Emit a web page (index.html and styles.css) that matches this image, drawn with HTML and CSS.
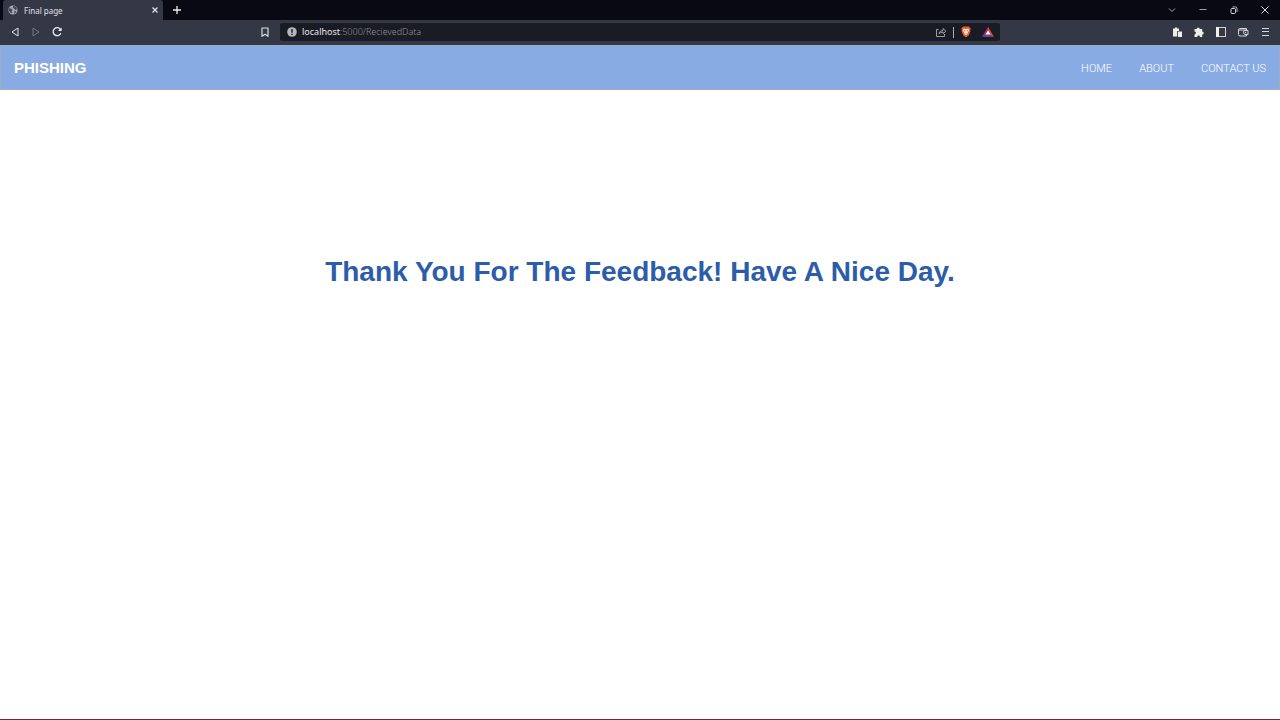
FILE: index.html
```html
<!DOCTYPE html>
<html lang="en">
<head>
<meta charset="utf-8">
<meta name="viewport" content="width=device-width, initial-scale=1">
<title>Final page</title>
<link rel="stylesheet" href="styles.css">
</head>
<body>
<div class="window">
  <div class="tabstrip">
    <div class="tab">
      <svg class="globe" viewBox="0 0 10 10"><circle cx="5" cy="5" r="4.6" fill="#a5a8b1"/><path d="M1 3.2L3.4 3.7 4.5 5 3.8 6.4 3.9 8.4 2.2 7.5.7 5zM5.2.7L8.3 2 9 4.4 7.2 4.9 6 3.6 4.8 2.8zM6.5 6L8.4 6.2 7.5 8 6 8.7z" fill="#454854"/></svg>
      <span class="tab-title">Final page</span>
      <button class="icon-btn" aria-label="Close tab"><svg class="small" viewBox="0 0 8 8"><path d="M1.5 1.5l5 5m0-5l-5 5" stroke="#e6e7eb" stroke-width="1.2"/></svg></button>
    </div>
    <button class="icon-btn new-tab" aria-label="New tab"><svg class="icon" viewBox="0 0 12 12"><path d="M6 2v8M2 6h8" stroke="#eee" stroke-width="1.3"/></svg></button>
    <div class="window-controls">
      <button class="icon-btn" aria-label="Search tabs"><svg class="icon" viewBox="0 0 12 12"><path d="M3 4.5l3 3 3-3" fill="none" stroke="#a5a6ad"/></svg></button>
      <button class="icon-btn" aria-label="Minimise"><svg class="icon" viewBox="0 0 12 12"><path d="M2.500 5.500h7" stroke="#a0a1a8"/></svg></button>
      <button class="icon-btn" aria-label="Restore"><svg class="icon" viewBox="0 0 12 12"><rect x="3" y="4.500" width="4.500" height="5" rx="1" fill="none" stroke="#d5d6da"/><path d="M4.500 3h3q1.500 0 1.500 1.500V8" fill="none" stroke="#b5b6bc"/></svg></button>
      <button class="icon-btn" aria-label="Close window"><svg class="icon" viewBox="0 0 12 12"><path d="M2.500 2.500l7 7m0-7l-7 7" stroke="#ddd"/></svg></button>
    </div>
  </div>

  <div class="toolbar">
    <div class="tools-left">
      <button class="icon-btn" aria-label="Back"><svg class="icon" viewBox="0 0 12 12"><path d="M9 2v8L3 6z" fill="none" stroke="#e4e5ea" stroke-linejoin="round"/></svg></button>
      <button class="icon-btn" aria-label="Forward" disabled><svg class="icon" viewBox="0 0 12 12"><path d="M3 2v8l6-4z" fill="none" stroke="#747783" stroke-linejoin="round"/></svg></button>
      <button class="icon-btn" aria-label="Reload"><svg class="icon" viewBox="0 0 12 12"><path d="M9.600 3.600A4 4 0 1 0 9.800 7.300" fill="none" stroke="#eee" stroke-width="1.300"/><path d="M10.600 1.500v3.600H7z" fill="#eee"/></svg></button>
      <button class="icon-btn bookmark" aria-label="Bookmark"><svg class="icon" viewBox="0 0 12 12"><path d="M3 2h6v8.300L6 8.300l-3 2z" fill="none" stroke="#dcdde2" stroke-width="1.200" stroke-linejoin="round"/></svg></button>
    </div>
    <div class="address">
      <svg class="icon" viewBox="0 0 12 12"><circle cx="6" cy="6" r="4.800" fill="#b6b7bc"/><path d="M6 3v3.700M6 7.700v1.400" stroke="#191b25" stroke-width="1.400"/></svg>
      <div class="url"><span class="host">localhost</span>:5000/RecievedData</div>
      <button class="icon-btn" aria-label="Share"><svg class="icon" viewBox="0 0 12 12"><path d="M3.500 3.500H1.500v7h8V8M4 8q.2-3.500 4-3.500V2.500L11 5.200 8 7.800V6Q5.300 6 4 8z" fill="none" stroke="#a9aab1" stroke-width=".9" stroke-linejoin="round"/></svg></button>
      <span class="divider"></span>
      <button class="icon-btn" aria-label="Shields"><svg class="icon" viewBox="0 0 12 12"><path d="M3.200.5h5.600l2 2-.5 1 .1 1.700-1.500 4.100L6 11.500 3.100 9.300 1.600 5.200l.1-1.700-.5-1z" fill="#ed5b2b"/><path d="M3.600 2.800L6 3.100l2.400-.3.900 1.800-1.500 1.800-.5 1.500L6 9 4.700 7.900l-.5-1.500-1.500-1.800z" fill="#fff2e9"/><path d="M3.500 3.900l1.900.6L5 6zM8.500 3.900l-1.900.6L7 6zM5 6.900h2l-1 .8z" fill="#e8582c"/></svg></button>
      <button class="icon-btn rewards" aria-label="Rewards"><svg class="icon" viewBox="0 0 12 12"><path d="M6 .8L0 11l6-3z" fill="#a32b73"/><path d="M6 .8L12 11 6 8z" fill="#ee4b32"/><path d="M0 11h12L6 7z" fill="#694596"/><path d="M6 4.500L3.500 8.600h5z" fill="#fff"/></svg></button>
    </div>
    <div class="tools-right">
      <button class="icon-btn" aria-label="Paste extension"><svg class="icon" viewBox="0 0 12 12"><path d="M2 2.500h2V1.500h2v1h2V5H6.200v5.500H2zM7 5.500h4V11H7z" fill="#eee"/></svg></button>
      <button class="icon-btn" aria-label="Extensions"><svg class="icon" viewBox="0 0 12 12"><path d="M1.500 3h2.200a1.500 1.500 0 1 1 3 0h2.500v2.500a1.500 1.500 0 1 1 0 3V11H7a1.400 1.400 0 1 0-2.800 0H1.500V8.400a1.400 1.400 0 1 0 0-2.800z" fill="#eee"/></svg></button>
      <button class="icon-btn" aria-label="Sidebar"><svg class="icon" viewBox="0 0 12 12"><rect x="1.500" y="1.500" width="9" height="9" fill="none" stroke="#d0d1d7"/><path d="M1 1h3v10H1z" fill="#eee"/></svg></button>
      <button class="icon-btn" aria-label="Wallet"><svg class="icon" viewBox="0 0 12 12"><path d="M9.500 4V2.500h-7Q1.500 2.500 1.500 4v4.500Q1.500 10 3 10h6.500V8.500M1.700 4h7.800M11 4.500H8Q6.500 4.500 6.500 6.300T8 8.500h3z" fill="none" stroke="#d5d6dc"/><circle cx="8.500" cy="6.500" r=".7" fill="#d5d6dc"/></svg></button>
      <button class="icon-btn" aria-label="Menu"><svg class="icon" viewBox="0 0 12 12"><path d="M3 2.500h7M3 5.500h7M3 9.500h7" stroke="#d5d6dc"/></svg></button>
    </div>
  </div>

  <header class="site-header">
    <a class="brand" href="#">PHISHING</a>
    <nav class="site-nav">
      <a href="#">HOME</a>
      <a href="#">ABOUT</a>
      <a href="#">CONTACT US</a>
    </nav>
  </header>

  <main class="content">
    <h1 class="message">Thank You For The Feedback! Have A Nice Day.</h1>
  </main>
</div>
</body>
</html>
```
FILE: styles.css
```css
* {
  box-sizing: border-box;
}

body {
  margin: 0;
  background: #fff;
  font-family: "Liberation Sans", Arial, sans-serif;
}

.window {
  display: flex;
  flex-direction: column;
  min-height: 100vh;
  border-bottom: 1px solid #782735;
}

.icon-btn {
  display: flex;
  padding: 0;
  border: 0;
  background: none;
}

.icon {
  width: 12px;
  height: 12px;
  flex: none;
}

.small {
  width: 8px;
  height: 8px;
}

.tabstrip {
  display: flex;
  align-items: center;
  height: 20px;
  padding: 0 9px 0 3px;
  background: #090914;
}

.tab {
  display: flex;
  align-items: center;
  width: 160px;
  height: 20px;
  padding: 0 4px 0 5px;
  border-radius: 3px 3px 0 0;
  background: #343744;
  color: #e2e3e8;
  font-family: "Noto Sans", sans-serif;
  font-size: 8px;
}

.globe {
  width: 10px;
  height: 10px;
  margin-right: 6px;
}

.tab-title {
  flex: 1;
}

.new-tab {
  margin-left: 8px;
}

.window-controls {
  display: flex;
  gap: 19px;
  margin-left: auto;
}

.toolbar {
  display: grid;
  grid-template-columns: 1fr 720px 1fr;
  align-items: center;
  height: 25px;
  padding-bottom: 1px;
  background: #343744;
}

.tools-left {
  display: flex;
  align-items: center;
  gap: 9px;
  padding: 0 9px;
}

.bookmark {
  margin-left: auto;
}

.address {
  display: flex;
  align-items: center;
  height: 18px;
  padding: 0 6px;
  border-radius: 2px;
  background: #191b25;
}

.url {
  flex: 1;
  padding-left: 4px;
  color: #91939b;
  font-family: "Noto Sans", sans-serif;
  font-size: 9px;
  font-weight: 300;
  line-height: 12px;
}

.host {
  color: #e6e7eb;
  font-weight: 400;
}

.divider {
  width: 1px;
  height: 11px;
  margin: 0 6px;
  background: #b0b1b7;
}

.rewards {
  margin-left: 10px;
}

.tools-right {
  display: flex;
  justify-content: flex-end;
  gap: 10px;
  padding: 0 9px;
}

.site-header {
  display: flex;
  align-items: center;
  justify-content: space-between;
  height: 45px;
  padding: 0 13px;
  border: 1px solid #9babca;
  background: #89abe3;
}

.site-header a {
  color: #fff;
  text-decoration: none;
}

.site-header .brand {
  font-size: 15px;
  font-weight: 700;
}

.site-nav {
  display: flex;
  gap: 27px;
  padding-top: 1px;
  font-family: Roboto, sans-serif;
  font-size: 11px;
  font-weight: 300;
}

.content {
  flex: 1;
  padding: 166px 20px 0;
}

.message {
  margin: 0;
  color: #2d5da8;
  font-size: 28px;
  line-height: 32px;
  text-align: center;
}
```
